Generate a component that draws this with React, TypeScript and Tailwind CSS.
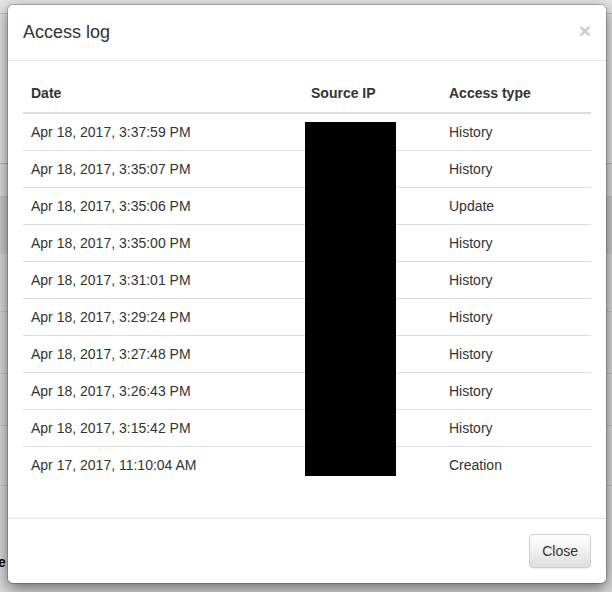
import React from "react";

const rows: [string, string][] = [
  ["Apr 18, 2017, 3:37:59 PM", "History"],
  ["Apr 18, 2017, 3:35:07 PM", "History"],
  ["Apr 18, 2017, 3:35:06 PM", "Update"],
  ["Apr 18, 2017, 3:35:00 PM", "History"],
  ["Apr 18, 2017, 3:31:01 PM", "History"],
  ["Apr 18, 2017, 3:29:24 PM", "History"],
  ["Apr 18, 2017, 3:27:48 PM", "History"],
  ["Apr 18, 2017, 3:26:43 PM", "History"],
  ["Apr 18, 2017, 3:15:42 PM", "History"],
  ["Apr 17, 2017, 11:10:04 AM", "Creation"],
];

export default function App() {
  return (
    <div
      className="relative w-[612px] h-[592px] overflow-hidden bg-[#dcdcdc] text-[#333]"
      style={{ fontFamily: '"Liberation Sans", Arial, sans-serif' }}
    >
      {/* page behind the modal */}
      <div className="flex flex-col w-full h-full">
        <div className="h-[14px] border-b border-[#c4c4c4] bg-[#e6e6e6]" />
        <div className="h-[150px] border-b border-[#bcbcbc] bg-[#e2e2e2]" />
        <div className="h-[33px] border-b border-[#c8c8c8] bg-[#dedede]" />
        <div className="h-[57px] bg-[#cdcdcd]" />
        <div className="h-[58px] border-b border-[#c6c6c6] bg-[#dcdcdc]" />
        <div className="h-[62px] border-b border-[#c6c6c6] bg-[#dcdcdc]" />
        <div className="h-[52px] border-b border-[#c6c6c6] bg-[#dcdcdc]" />
        <div className="h-[60px] border-b border-[#c6c6c6] bg-[#dcdcdc]" />
        <div className="flex-1 bg-[#dcdcdc] pt-[66px] text-[14px] font-bold text-black leading-[20px] -ml-[2px]">
          e
        </div>
      </div>

      {/* modal */}
      <div className="absolute left-[7px] top-[4px] w-[600px] bg-white rounded-[6px] border border-black/20 shadow-[0_5px_15px_rgba(0,0,0,0.5)] bg-clip-padding">
        <div className="flex items-start justify-between px-[15px] pt-[14px] pb-[15px] border-b border-[#e5e5e5]">
          <h4 className="text-[18px] leading-[26px] font-normal">Access log</h4>
          <button className="mt-[1px] text-[21px] leading-none font-bold text-black opacity-20 [text-shadow:0_1px_0_#fff]">
            ×
          </button>
        </div>

        <div className="px-[15px] pt-[14px] pb-[15px]">
          <div className="relative mb-[20px]">
            <table className="w-full border-collapse text-[14px] leading-[20px]">
              <thead>
                <tr>
                  <th className="w-[280px] text-left font-bold p-[8px] pb-[9px] border-b-2 border-[#ddd]">Date</th>
                  <th className="w-[138px] text-left font-bold p-[8px] pb-[9px] border-b-2 border-[#ddd]">Source IP</th>
                  <th className="text-left font-bold p-[8px] pb-[9px] border-b-2 border-[#ddd]">Access type</th>
                </tr>
              </thead>
              <tbody>
                {rows.map(([date, type], i) => (
                  <tr key={i}>
                    <td className={`p-[8px] ${i > 0 ? "border-t border-[#ddd]" : ""}`}>{date}</td>
                    <td className={`p-[8px] ${i > 0 ? "border-t border-[#ddd]" : ""}`}></td>
                    <td className={`p-[8px] ${i > 0 ? "border-t border-[#ddd]" : ""}`}>{type}</td>
                  </tr>
                ))}
              </tbody>
            </table>
            {/* redacted IPs */}
            <div className="absolute left-[282px] top-[47px] w-[91px] h-[354px] bg-black" />
          </div>
        </div>

        <div className="flex justify-end px-[15px] py-[15px] border-t border-[#e5e5e5]">
          <button className="h-[34px] px-[12px] text-[14px] leading-[20px] text-[#333] rounded-[4px] border border-[#ccc] bg-gradient-to-b from-white to-[#e0e0e0] shadow-[inset_0_1px_0_rgba(255,255,255,0.15),0_1px_1px_rgba(0,0,0,0.075)]">
            Close
          </button>
        </div>
      </div>
    </div>
  );
}
